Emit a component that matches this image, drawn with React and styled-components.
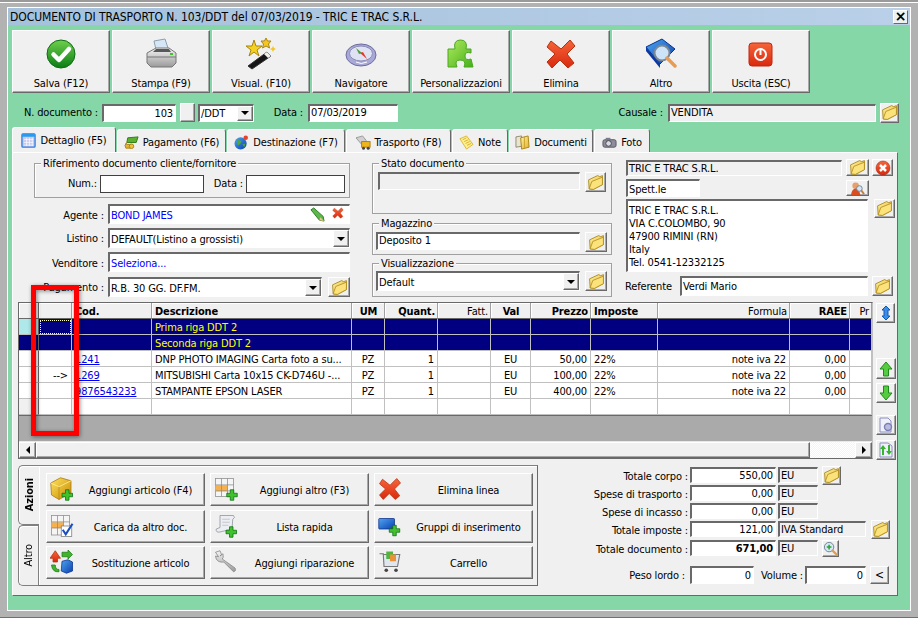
import React from "react";
import styled, { createGlobalStyle } from "styled-components";

const Global = createGlobalStyle`
  html, body { margin: 0; padding: 0; background: #b0b0b0; }
  * { box-sizing: border-box; }
`;

const PANEL = "#f0f0f0";
const DARK = "#696969";

const Defs = () => (
  <svg width="0" height="0" style={{ position: "absolute" }}>
    <defs>
      <linearGradient id="gGreen" x1="0" y1="0" x2="0" y2="1"><stop offset="0" stopColor="#6fd04c" /><stop offset="1" stopColor="#0b7d14" /></linearGradient>
      <linearGradient id="gLime" x1="0" y1="0" x2="1" y2="1"><stop offset="0" stopColor="#b0ea5c" /><stop offset="1" stopColor="#45b01c" /></linearGradient>
      <linearGradient id="gRed" x1="0" y1="0" x2="0" y2="1"><stop offset="0" stopColor="#f6663a" /><stop offset="1" stopColor="#d9280e" /></linearGradient>
      <linearGradient id="gFolder" x1="0" y1="0" x2="1" y2="1"><stop offset="0" stopColor="#fff3a8" /><stop offset="1" stopColor="#e3b127" /></linearGradient>
      <linearGradient id="gGray" x1="0" y1="0" x2="0" y2="1"><stop offset="0" stopColor="#f4f4f4" /><stop offset="1" stopColor="#9a9a9a" /></linearGradient>
      <linearGradient id="gBlue" x1="0" y1="0" x2="1" y2="1"><stop offset="0" stopColor="#4ea6f0" /><stop offset="1" stopColor="#0a3fb0" /></linearGradient>
      <linearGradient id="gGold" x1="0" y1="0" x2="1" y2="1"><stop offset="0" stopColor="#ffe25a" /><stop offset="1" stopColor="#c98a06" /></linearGradient>
    </defs>
  </svg>
);

const Ico = ({ s = 32, vb = 32, children }) => (
  <svg width={s} height={s} viewBox={`0 0 ${vb} ${vb}`}>{children}</svg>
);

const XShape = ({ fill = "url(#gRed)" }) => (
  <path d="M6 3 L16 11 L25 2 L30 8 L22 16 L29 25 L23 30 L15 22 L7 30 L2 24 L10 16 L2 9 Z" fill={fill} stroke="#b5300f" strokeWidth="1" strokeLinejoin="round" />
);

const Plus = ({ x = 20, y = 20, r = 6 }) => (
  <path d={`M${x - r / 3} ${y - r}h${(2 * r) / 3}v${(2 * r) / 3}h${(2 * r) / 3}v${(2 * r) / 3}h${(-2 * r) / 3}v${(2 * r) / 3}h${(-2 * r) / 3}v${(-2 * r) / 3}h${(-2 * r) / 3}v${(-2 * r) / 3}h${(2 * r) / 3}z`} fill="#3fc22c" stroke="#0c6a10" strokeWidth="1" />
);

const Folder = () => (
  <Ico s={17}>
    <path d="M3 11 L20 3 L24 5 L29 3 L29 20 L12 29 L4 28 Z" fill="url(#gFolder)" stroke="#a88415" strokeWidth="1.6" strokeLinejoin="round" />
    <path d="M4 28 L9 14 L29 6 L29 20 L12 29 Z" fill="#fbe27a" stroke="#a88415" strokeWidth="1.4" strokeLinejoin="round" />
  </Ico>
);

const icons = {
  save: (
    <Ico>
      <circle cx="16" cy="16" r="14" fill="url(#gGreen)" stroke="#0e6d14" />
      <path d="M8.5 16.5 L14 22 L24 11" fill="none" stroke="#fff" strokeWidth="4.5" strokeLinecap="round" strokeLinejoin="round" />
    </Ico>
  ),
  print: (
    <Ico>
      <path d="M9 3 L20 1 L24 13 L12 16 Z" fill="#d7e6f4" stroke="#8b9fb2" />
      <path d="M2 15 L11 10 L24 10 L31 15 L31 25 L27 29 L6 29 L2 25 Z" fill="url(#gGray)" stroke="#777" />
      <path d="M2 19 L31 19" stroke="#777" />
      <path d="M8 14 L26 14 L24 11 L11 11 Z" fill="#55595c" />
      <rect x="25" y="15" width="3" height="2" fill="#3fc22c" />
    </Ico>
  ),
  wand: (
    <Ico>
      <path d="M3 28 L22 14 L26 18 L7 31 Z" fill="#151515" stroke="#333" />
      <path d="M19 16 L22 14 L26 18 L23 20 Z" fill="#eee" />
      <path d="M9 2 L11 8 L17 8 L12 12 L14 18 L9 14 L4 18 L6 12 L1 8 L7 8 Z" fill="#f4d21f" stroke="#a88415" />
      <path d="M21 0 L22.5 3 L26 3 L23.5 6 L24.5 10 L21 8 L17.5 10 L18.5 6 L16 3 L19.5 3 Z" fill="#f4c61f" stroke="#a88415" />
      <path d="M28 8 L29 10 L31 11 L29 12 L28 14 L27 12 L25 11 L27 10 Z" fill="#f4c61f" />
    </Ico>
  ),
  nav: (
    <Ico>
      <ellipse cx="16" cy="17" rx="15" ry="11" fill="#a9a9d8" stroke="#6c6c9e" />
      <ellipse cx="16" cy="15.5" rx="11.5" ry="7.5" fill="#dfe2f3" stroke="#8b8bb8" />
      <path d="M11 10 L17 15 L14 16 Z" fill="#4f9a42" />
      <path d="M22 21 L15 15 L18 14 Z" fill="#e03a26" />
      <path d="M11 24 Q16 27 22 24" stroke="#fff" fill="none" />
    </Ico>
  ),
  puzzle: (
    <Ico>
      <path d="M3 11 H10 Q8 2 15.5 2 Q23 2 21 11 H26 V15 Q20 13 20 18 Q20 23 26 21 L28 29 H19 Q22 22 15 22 Q9 22 12 29 H3 Z" fill="url(#gLime)" stroke="#48a81e" strokeLinejoin="round" />
    </Ico>
  ),
  del: <Ico><XShape /></Ico>,
  book: (
    <Ico>
      <path d="M1 9 L17 1 L30 11 L15 26 Z" fill="url(#gBlue)" stroke="#0a2f8c" />
      <path d="M1 9 L15 26 L15 30 L1 13 Z" fill="#0a3aa0" />
      <circle cx="17" cy="15" r="7.5" fill="#cde4f8" stroke="#7a8794" strokeWidth="2" />
      <path d="M22 20 L30 28" stroke="#e99a53" strokeWidth="3.4" strokeLinecap="round" />
    </Ico>
  ),
  exit: (
    <Ico>
      <rect x="4" y="5" width="23" height="23" rx="3" fill="url(#gRed)" stroke="#c0280e" />
      <circle cx="15.5" cy="16.5" r="5.5" fill="none" stroke="#fff" strokeWidth="2" />
      <path d="M15.5 12 V17" stroke="#fff" strokeWidth="2" />
    </Ico>
  ),
};

const tabIcons = {
  detail: (
    <Ico s={15} vb={16}>
      <rect x="1" y="1" width="14" height="14" rx="1" fill="#c9c9f0" stroke="#2a80e0" strokeWidth="1.4" />
      <rect x="1" y="1" width="14" height="3" fill="#2a9af0" />
      <path d="M3 7h10M3 10h10M3 13h10M6 5v9M9 5v9M12 5v9" stroke="#fff" strokeWidth=".7" />
    </Ico>
  ),
  pay: (
    <Ico s={15} vb={16}>
      <path d="M4 3 L15 2 L13 8 L3 8 Z" fill="#5cb030" stroke="#2f7a18" />
      <path d="M3 8 Q1 10 3 10 L8 10 L7 14 L2 14 L1 11 Z" fill="#e6b52a" stroke="#a9801a" />
      <circle cx="8" cy="12" r="2.4" fill="#efc23a" stroke="#a9801a" />
    </Ico>
  ),
  dest: (
    <Ico s={15} vb={16}>
      <circle cx="7" cy="9" r="6.5" fill="url(#gBlue)" />
      <path d="M3 6 Q6 4 8 7 Q6 11 4 11 Z M9 10 L12 9 L11 13 Z" fill="#4eaa3a" />
      <circle cx="12.5" cy="3" r="2.4" fill="#e2452a" />
    </Ico>
  ),
  truck: (
    <Ico s={15} vb={16}>
      <path d="M0 3 L7 1 L11 6 L6 10 Z" fill="#d0d0d0" stroke="#9a9a9a" />
      <rect x="6" y="7" width="9" height="6" fill="#f0b51c" stroke="#a87e10" />
      <circle cx="8" cy="14" r="1.6" fill="#444" />
      <circle cx="13" cy="14" r="1.6" fill="#444" />
    </Ico>
  ),
  note: (
    <Ico s={15} vb={16}>
      <path d="M1 4 L8 1 L15 10 L8 15 Z" fill="#fdf08a" stroke="#d7b73a" />
      <path d="M4 5 L8 3M5.5 7 L10 5M7 9 L11.5 7M8.5 11 L13 9" stroke="#d29b25" strokeWidth=".8" />
    </Ico>
  ),
  docs: (
    <Ico s={15} vb={16}>
      <path d="M1 2 L7 1 L7 12 L1 13 Z" fill="#e8e4d2" stroke="#8f8a70" />
      <path d="M6 3 L14 1 L15 13 L7 15 Z" fill="url(#gFolder)" stroke="#a88415" />
      <path d="M10 2 V14" stroke="#c9a02a" />
    </Ico>
  ),
  photo: (
    <Ico s={15} vb={16}>
      <rect x="1" y="5" width="14" height="8" rx="2" fill="#8d8d9b" stroke="#55555f" />
      <rect x="4" y="3" width="5" height="3" fill="#7a7a85" />
      <circle cx="7" cy="9" r="3" fill="#d9d9e6" stroke="#44444e" />
    </Ico>
  ),
};

const actionIcons = {
  addArt: (
    <Ico s={24}>
      <path d="M1 8 L14 1 L28 5 L28 21 L12 30 L2 24 Z" fill="url(#gGold)" stroke="#a3760a" />
      <path d="M1 8 L12 13 L28 5" fill="none" stroke="#fff1a0" />
      <path d="M12 13 V30" stroke="#b98a0a" />
      <Plus x={23} y={24} r={7} />
    </Ico>
  ),
  addOther: (
    <Ico s={24}>
      <rect x="2" y="2" width="24" height="24" fill="#f5f5f5" stroke="#8a8a8a" />
      <rect x="2" y="11" width="16" height="8" fill="#f6b04e" />
      <path d="M2 10.5h24M2 18.5h24M10 2v24M18 2v24" stroke="#8a8a8a" />
      <Plus x={24} y={24} r={7} />
    </Ico>
  ),
  del: <Ico s={24}><XShape /></Ico>,
  load: (
    <Ico s={24}>
      <rect x="2" y="2" width="24" height="26" fill="#f5f5f5" stroke="#8a8a8a" />
      <rect x="2" y="11" width="16" height="8" fill="#f6b04e" />
      <path d="M2 10.5h24M2 18.5h24M10 2v26M18 2v26" stroke="#8a8a8a" />
      <rect x="15" y="16" width="14" height="14" fill="#fff" stroke="#777" />
      <path d="M17 21 L21 27 L30 13" fill="none" stroke="#1a4fc0" strokeWidth="2.8" />
    </Ico>
  ),
  list: (
    <Ico s={24}>
      <path d="M8 2 L26 2 Q29 5 25 7 L24 20 L8 24 Q2 25 3 20 L8 18 Z" fill="#eceef2" stroke="#8b8f99" />
      <path d="M11 7h10M11 11h10M11 15h8" stroke="#b5b8c0" />
      <Plus x={23} y={24} r={7} />
    </Ico>
  ),
  group: (
    <Ico s={24}>
      <rect x="1" y="6" width="21" height="14" rx="1" fill="url(#gBlue)" stroke="#0a2f8c" />
      <Plus x={22} y={22} r={7} />
    </Ico>
  ),
  swap: (
    <Ico s={24}>
      <path d="M7 1 L14 11 L10 11 L10 16 L4 16 L4 11 L0 11 Z" fill="url(#gRed)" stroke="#b5300f" />
      <path d="M16 3 L24 3 L24 0 L30 6 L24 12 L24 9 L16 9 Z" fill="#3fb52c" stroke="#207a18" />
      <path d="M2 20 Q3 30 12 29 L12 26 Q7 26 7 20 Z" fill="#3fb52c" stroke="#207a18" />
      <path d="M16 15 L24 13 L30 16 L30 28 L22 31 L15 28 Z" fill="url(#gBlue)" stroke="#0a2f8c" />
    </Ico>
  ),
  repair: (
    <Ico s={24}>
      <path d="M2 3 L8 1 L10 6 L8 8 L12 5 Q13 11 11 12 L28 24 Q30 28 26 29 L13 16 Q6 17 3 12 L2 8 L6 9 Z" fill="url(#gGray)" stroke="#808080" />
    </Ico>
  ),
  cart: (
    <Ico s={24}>
      <path d="M2 5 L7 5 L8 22 L26 22 L29 6 L7 6" fill="#dfe6f0" stroke="#777" strokeWidth="1.5" />
      <rect x="11" y="2" width="9" height="10" fill="#4fb540" />
      <rect x="16" y="6" width="8" height="9" fill="#e8923a" />
      <circle cx="11" cy="27" r="2.4" fill="#444" />
      <circle cx="24" cy="27" r="2.4" fill="#444" />
    </Ico>
  ),
};

const Window = styled.div`
  position: relative;
  width: 918px;
  height: 618px;
  padding: 7px 7px 7px 7px;
  background: #b2b2b2;
  font-family: "DejaVu Sans Condensed", "DejaVu Sans", sans-serif;
  font-stretch: condensed;
  font-size: 11px;
  letter-spacing: -0.15px;
  color: #000;
  overflow: hidden;
  box-shadow: inset 0 2px #9a9a9a, inset 0 3px #fff, inset 0 -1px #707070;
`;

const Dialog = styled.div`
  height: 604px;
  border: 1px solid #fff;
  background: #85d7a8;
  display: flex;
  flex-direction: column;
`;

const TitleBar = styled.div`
  height: 17px;
  flex: none;
  padding: 0 2px;
  display: flex;
  align-items: center;
  justify-content: space-between;
  background: linear-gradient(90deg, #a5c1db, #bad0e9);
  font-size: 12px;
  letter-spacing: -0.07px;
`;

const CloseBox = styled.div`
  width: 15px;
  height: 14px;
  background: ${PANEL};
  border: 1px solid;
  border-color: #fff ${DARK} ${DARK} #fff;
  font: bold 14px/11px "DejaVu Sans", sans-serif;
  text-align: center;
`;

const Body = styled.div`
  flex: 1;
  padding: 5px 12px 14px 4px;
  display: flex;
  flex-direction: column;
  min-height: 0;
`;

const Toolbar = styled.div`
  display: flex;
  gap: 2px;
  height: 63px;
  flex: none;
`;

const raised = `
  background: ${PANEL};
  border: 1px solid;
  border-color: #fff ${DARK} ${DARK} #fff;
  box-shadow: inset -1px -1px #a8a8a8;
`;

const ToolButton = styled.div`
  ${raised}
  width: 98px;
  display: flex;
  flex-direction: column;
  align-items: center;
  padding-top: 7px;
  svg { flex: none; }
  span { margin-top: auto; line-height: 16px; white-space: nowrap; }
`;

const DocRow = styled.div`
  display: flex;
  align-items: center;
  height: 19px;
  flex: none;
  margin-top: 10px;
`;

const Label = styled.div`
  flex: none;
  width: ${(p) => p.$w || 60}px;
  margin-left: ${(p) => p.$ml || 0}px;
  margin-right: ${(p) => (p.$mr === undefined ? 4 : p.$mr)}px;
  padding-top: ${(p) => p.$pt || 0}px;
  text-align: ${(p) => p.$align || "right"};
  line-height: ${(p) => (p.$lh ? `${p.$lh}px` : "normal")};
  white-space: nowrap;
`;

const Field = styled.div`
  flex: none;
  width: ${(p) => p.$w}px;
  height: ${(p) => p.$h || 18}px;
  margin-left: ${(p) => p.$ml || 0}px;
  background: ${(p) => (p.$flat ? PANEL : "#fff")};
  border: 1px solid;
  border-width: 2px 1px 1px 2px;
  border-color: ${DARK} #fff #fff ${DARK};
  padding: 0 ${(p) => (p.$align === "right" ? 2 : 0)}px 0 1px;
  text-align: ${(p) => p.$align || "left"};
  color: ${(p) => (p.$blue ? "#0000ff" : "#000")};
  font-weight: ${(p) => (p.$bold ? 700 : 400)};
  line-height: ${(p) => p.$lh || (p.$h || 18) - 3}px;
  white-space: nowrap;
  overflow: hidden;
  display: ${(p) => (p.$flex ? "flex" : "block")};
  align-items: center;
`;

const SolidField = styled(Field)`
  border: 1px solid #404040;
  background: #fff;
`;

const FieldText = styled.span`
  padding-top: 2px;
`;

const DropBtn = styled.div`
  ${raised}
  flex: none;
  width: 16px;
  height: 100%;
  margin-left: auto;
  display: flex;
  align-items: center;
  justify-content: center;
  &::after {
    content: "";
    border: 4px solid transparent;
    border-top: 4px solid #000;
    border-bottom: 0;
  }
`;

const SquareBtn = styled.div`
  ${raised}
  flex: none;
  width: ${(p) => p.$w || 21}px;
  height: ${(p) => p.$h || 20}px;
  margin-left: ${(p) => p.$ml || 0}px;
  margin-top: ${(p) => p.$mt || 0}px;
  display: flex;
  align-items: center;
  justify-content: center;
  font-size: 12px;
`;

const TabStrip = styled.div`
  display: flex;
  align-items: flex-end;
  gap: 1px;
  height: 25px;
  flex: none;
  margin-top: 5px;
`;

const Tab = styled.div`
  width: ${(p) => p.$w}px;
  height: ${(p) => (p.$active ? 25 : 23)}px;
  padding-top: ${(p) => (p.$active ? 1 : 3)}px;
  background: ${PANEL};
  border: 1px solid;
  border-bottom: 0;
  border-color: #fff ${DARK} transparent #fff;
  border-radius: 3px 3px 0 0;
  display: flex;
  align-items: center;
  justify-content: center;
  gap: 4px;
  white-space: nowrap;
`;

const Page = styled.div`
  flex: 1;
  min-height: 0;
  background: ${PANEL};
  border: 1px solid;
  border-color: #fff ${DARK} ${DARK} #fff;
  display: flex;
  flex-direction: column;
`;

const TopArea = styled.div`
  display: flex;
  height: 149px;
  flex: none;
  padding: 6px 0 0 21px;
`;

const LeftCol = styled.div`
  width: 316px;
  flex: none;
  padding-top: 4px;
`;

const MidCol = styled.div`
  width: 240px;
  flex: none;
  margin-left: 22px;
  padding-top: 4px;
  display: flex;
  flex-direction: column;
`;

const RightCol = styled.div`
  width: 272px;
  flex: none;
  margin-left: 14px;
  display: flex;
  flex-direction: column;
`;

const Group = styled.div`
  position: relative;
  height: ${(p) => p.$h}px;
  margin-top: ${(p) => p.$mt || 0}px;
  border: 1px solid #a0a0a0;
  box-shadow: inset 1px 1px #fff;
  padding: ${(p) => p.$pt}px 0 0 ${(p) => p.$pl}px;
  display: flex;
  align-items: flex-start;
`;

const Legend = styled.span`
  position: absolute;
  left: 6px;
  top: -7px;
  padding: 0 2px;
  background: ${PANEL};
  line-height: 14px;
  white-space: nowrap;
`;

const FormRow = styled.div`
  display: flex;
  align-items: center;
  margin-top: ${(p) => p.$mt || 0}px;
`;

const GridArea = styled.div`
  display: flex;
  flex: none;
  margin-left: 5px;
  height: 157px;
`;

const GridFrame = styled.div`
  width: 855px;
  flex: none;
  display: flex;
  flex-direction: column;
  background: #aaa;
  border: 1px solid ${DARK};
  border-right-color: #c0c0c0;
  border-bottom-width: 1px;
`;

const Table = styled.div`
  display: grid;
  grid-template-columns: 20px 33px 80px 200px 33px 53px 53px 40px 60px 67px 132px 60px 22px;
  grid-auto-rows: 16px;
  flex: none;
  background: #fff;
  overflow: hidden;
  border-bottom: 1px solid ${DARK};
  height: 113px;
`;

const HeadCell = styled.div`
  background: ${PANEL};
  border-right: 1px solid ${(p) => (p.$strong ? DARK : "#a0a0a0")};
  border-bottom: 1px solid ${DARK};
  box-shadow: inset 1px 1px #fff;
  padding: 1px 2px 0 3px;
  font-weight: ${(p) => (p.$bold ? 700 : 400)};
  text-align: ${(p) => p.$align || "left"};
  line-height: 15px;
  white-space: nowrap;
  overflow: hidden;
`;

const Cell = styled.div`
  background: ${(p) => p.$bg || "#fff"};
  color: ${(p) => (p.$navy ? "#ffff00" : "#000")};
  border-right: 1px solid ${(p) => (p.$strong ? DARK : "#c0c0c0")};
  border-bottom: 1px solid #c0c0c0;
  padding: 1px 3px 0;
  text-align: ${(p) => p.$align || "left"};
  line-height: 15px;
  white-space: nowrap;
  overflow: hidden;
  outline: ${(p) => (p.$focus ? "1px dotted #ffffc0" : "none")};
  outline-offset: -2px;
`;

const Link = styled.span`
  color: #0000ee;
  text-decoration: underline;
`;

const GrayFill = styled.div`
  flex: 1;
  background: #aaa;
`;

const HScroll = styled.div`
  height: 16px;
  flex: none;
  display: flex;
  background: ${PANEL};
  box-shadow: 0 -1px #e8e8e8;
`;

const ScrollBtn = styled.div`
  ${raised}
  width: 17px;
  flex: none;
  display: flex;
  align-items: center;
  justify-content: center;
  &::after {
    content: "";
    border: 4px solid transparent;
    ${(p) => (p.$left ? "border-right: 4px solid #000; border-left: 0;" : "border-left: 4px solid #000; border-right: 0;")}
  }
`;

const ScrollThumb = styled.div`
  ${raised}
  flex: 1;
`;

const ScrollTrack = styled.div`
  width: 45px;
  flex: none;
  background: repeating-conic-gradient(#f4f4f4 0 25%, #fff 0 50%) 0 0 / 2px 2px;
`;

const SideCol = styled.div`
  width: 22px;
  margin-left: 3px;
  display: flex;
  flex-direction: column;
`;

const BottomArea = styled.div`
  flex: 1;
  display: flex;
  min-height: 0;
  margin: 6px 0 0 5px;
`;

const VTabs = styled.div`
  width: 21px;
  flex: none;
  display: flex;
  flex-direction: column;
  position: relative;
  z-index: 1;
`;

const VTab = styled.div`
  height: ${(p) => p.$h}px;
  width: ${(p) => (p.$active ? 21 : 20)}px;
  background: ${PANEL};
  border: 1px solid #808080;
  border-right: 0;
  box-shadow: inset 1px 1px #fff;
  border-radius: 5px 0 0 5px;
  display: flex;
  align-items: center;
  justify-content: center;
  font-weight: ${(p) => (p.$active ? 700 : 400)};
  span { writing-mode: vertical-rl; transform: rotate(180deg); }
`;

const ActionPanel = styled.div`
  width: 500px;
  height: 121px;
  flex: none;
  margin-left: -1px;
  border: 1px solid;
  border-color: #808080 ${DARK} ${DARK} #808080;
  box-shadow: inset 1px 1px #fff;
  padding: 7px 0 0 7px;
  display: grid;
  grid-template-columns: repeat(3, 159px);
  grid-template-rows: repeat(3, 33px);
  column-gap: 5px;
  row-gap: 3.5px;
`;

const ActionButton = styled.div`
  ${raised}
  position: relative;
  display: flex;
  align-items: center;
  padding: 2px 0 0 30px;
  justify-content: center;
  white-space: nowrap;
  svg { position: absolute; left: 3px; top: 3px; }
`;

const Totals = styled.div`
  flex: 1;
  display: flex;
  flex-direction: column;
  gap: 2px;
  padding-top: 2px;
`;

const TotalRow = styled.div`
  display: flex;
  align-items: center;
  height: 16px;
  margin-top: ${(p) => p.$mt || 0}px;
`;

const Annotation = styled.div`
  position: absolute;
  left: 31px;
  top: 285px;
  width: 48px;
  height: 151px;
  border: 5px solid #f00;
  filter: drop-shadow(1px 1px 2px rgba(0, 0, 0, 0.45));
`;

const IconPair = styled.span`
  margin-left: auto;
  display: flex;
  gap: 7px;
  padding-right: 5px;
`;

const AddressBox = styled.div`
  flex: none;
  width: 242px;
  height: 73px;
  background: #fff;
  border: 1px solid;
  border-width: 2px 1px 1px 2px;
  border-color: ${DARK} #fff #fff ${DARK};
  padding: 3px 0 0 1px;
  line-height: 13px;
`;

const AddressBtn = styled.div`
  ${raised}
  flex: none;
  width: 21px;
  height: 19px;
  margin: 0 0 54px 6px;
  display: flex;
  align-items: center;
  justify-content: center;
`;

const tools = [
  ["save", "Salva (F12)"],
  ["print", "Stampa (F9)"],
  ["wand", "Visual. (F10)"],
  ["nav", "Navigatore"],
  ["puzzle", "Personalizzazioni"],
  ["del", "Elimina"],
  ["book", "Altro"],
  ["exit", "Uscita (ESC)"],
];

const tabs = [
  ["detail", "Dettaglio (F5)", 104, true],
  ["pay", "Pagamento (F6)", 109],
  ["dest", "Destinazione (F7)", 118],
  ["truck", "Trasporto (F8)", 105],
  ["note", "Note", 56],
  ["docs", "Documenti", 84],
  ["photo", "Foto", 56],
];

const header = [
  ["", false, "left"],
  ["", false, "left"],
  ["Cod.", true, "left"],
  ["Descrizione", true, "left"],
  ["UM", true, "center"],
  ["Quant.", true, "right"],
  ["Fatt.", false, "right"],
  ["Val", true, "center"],
  ["Prezzo", true, "right"],
  ["Imposte", true, "left"],
  ["Formula", false, "right"],
  ["RAEE", true, "right"],
  ["Pr", false, "right"],
];

const aligns = ["left", "right", "left", "left", "center", "right", "right", "center", "right", "left", "right", "right", "left"];

const rows = [
  { navy: true, cells: ["", "", "", "Prima riga DDT 2", "", "", "", "", "", "", "", "", ""] },
  { navy: true, cells: ["", "", "", "Seconda riga DDT 2", "", "", "", "", "", "", "", "", ""] },
  { cells: ["", "", "1241", "DNP PHOTO IMAGING Carta foto a su...", "PZ", "1", "", "EU", "50,00", "22%", "note iva 22", "0,00", ""] },
  { cells: ["", "-->", "1269", "MITSUBISHI Carta 10x15 CK-D746U -...", "PZ", "1", "", "EU", "100,00", "22%", "note iva 22", "0,00", ""] },
  { cells: ["", "", "9876543233", "STAMPANTE EPSON LASER", "PZ", "1", "", "EU", "400,00", "22%", "note iva 22", "0,00", ""] },
  { cells: ["", "", "", "", "", "", "", "", "", "", "", "", ""] },
];

const actions = [
  ["addArt", "Aggiungi articolo (F4)"],
  ["addOther", "Aggiungi altro (F3)"],
  ["del", "Elimina linea"],
  ["load", "Carica da altro doc."],
  ["list", "Lista rapida"],
  ["group", "Gruppi di inserimento"],
  ["swap", "Sostituzione articolo"],
  ["repair", "Aggiungi riparazione"],
  ["cart", "Carrello"],
];

const totals = [
  { label: "Totale corpo :", value: "550,00", unit: "EU", btn: true },
  { label: "Spese di trasporto :", value: "0,00", unit: "EU" },
  { label: "Spese di incasso :", value: "0,00", unit: "EU" },
  { label: "Totale imposte :", value: "121,00", unit: "IVA Standard", wide: true, btn: true },
  { label: "Totale documento :", value: "671,00", unit: "EU", bold: true, zoom: true, mt: 1 },
];

const arrowSvg = (d, fill, stroke) => (
  <Ico s={16} vb={16}><path d={d} fill={fill} stroke={stroke} /></Ico>
);

function BodyRow({ row, index }) {
  return row.cells.map((text, c) => {
    let bg = row.navy ? "#000080" : "#fff";
    if (index === 0 && c === 0) bg = "#aee8e8";
    if (index === 5 && c === 0) bg = PANEL;
    return (
      <Cell
        key={c}
        $bg={bg}
        $navy={row.navy}
        $align={aligns[c]}
        $strong={c === 0}
        $focus={index === 0 && c === 1}
      >
        {c === 2 && text ? <Link>{text}</Link> : text}
      </Cell>
    );
  });
}

export default function App() {
  return (
    <Window>
      <Global />
      <Defs />
      <Dialog>
        <TitleBar>
          DOCUMENTO DI TRASPORTO N. 103/DDT del 07/03/2019 - TRIC E TRAC S.R.L.
          <CloseBox>×</CloseBox>
        </TitleBar>
        <Body>
          <Toolbar>
            {tools.map(([icon, label]) => (
              <ToolButton key={label}>
                {icons[icon]}
                <span>{label}</span>
              </ToolButton>
            ))}
          </Toolbar>

          <DocRow>
            <Label $w={86}>N. documento :</Label>
            <Field $w={74} $align="right">103</Field>
            <SquareBtn $w={15} $h={19} $ml={4} />
            <Field $w={56} $ml={3} $flex>/DDT<DropBtn /></Field>
            <Label $w={30} $ml={19} $mr={5}>Data :</Label>
            <Field $w={90} $lh={14}>07/03/2019</Field>
            <Label $w={50} $ml={215} $mr={5}>Causale :</Label>
            <Field $w={208} $flat $lh={13}>VENDITA</Field>
            <SquareBtn $w={19} $h={20} $ml={4}><Folder /></SquareBtn>
          </DocRow>

          <TabStrip>
            {tabs.map(([icon, label, w, active]) => (
              <Tab key={label} $w={w} $active={active}>
                {tabIcons[icon]}
                {label}
              </Tab>
            ))}
          </TabStrip>

          <Page>
            <TopArea>
              <LeftCol>
                <Group $h={35} $pt={11} $pl={1}>
                  <Legend>Riferimento documento cliente/fornitore</Legend>
                  <Label $w={61} $mr={3} $lh={18}>Num.:</Label>
                  <SolidField $w={104} />
                  <Label $w={36} $ml={3} $mr={3} $lh={18}>Data :</Label>
                  <SolidField $w={99} />
                </Group>
                <FormRow $mt={6}>
                  <Label $w={70} $pt={2}>Agente :</Label>
                  <Field $w={242} $h={20} $blue $flex>
                    <FieldText>BOND JAMES</FieldText>
                    <IconPair>
                      <Ico s={15} vb={16}>
                        <path d="M1 3 L4 1 L14 10 L15 15 L10 14 Z" fill="#5db84a" stroke="#2f7a28" />
                        <path d="M11 11 L15 15 L10 14 Z" fill="#eac48a" />
                      </Ico>
                      <Ico s={12}><XShape /></Ico>
                    </IconPair>
                  </Field>
                </FormRow>
                <FormRow $mt={4}>
                  <Label $w={70}>Listino :</Label>
                  <Field $w={242} $h={20} $flex><FieldText>DEFAULT(Listino a grossisti)</FieldText><DropBtn /></Field>
                </FormRow>
                <FormRow $mt={4}>
                  <Label $w={70} $pt={2}>Venditore :</Label>
                  <Field $w={242} $h={20} $blue $flex><FieldText>Seleziona...</FieldText></Field>
                </FormRow>
                <FormRow $mt={5}>
                  <Label $w={70}>Pagamento :</Label>
                  <Field $w={214} $h={20} $flex><FieldText>R.B. 30 GG. DF.FM.</FieldText><DropBtn /></Field>
                  <SquareBtn $w={22} $h={20} $ml={6}><Folder /></SquareBtn>
                </FormRow>
              </LeftCol>

              <MidCol>
                <Group $h={51} $pt={8} $pl={5}>
                  <Legend>Stato documento</Legend>
                  <Field $w={202} $flat />
                  <SquareBtn $w={21} $h={20} $ml={5}><Folder /></SquareBtn>
                </Group>
                <Group $h={32} $mt={9} $pt={8} $pl={3}>
                  <Legend>Magazzino</Legend>
                  <Field $w={204} $lh={13}>Deposito 1</Field>
                  <SquareBtn $w={22} $h={20} $ml={5}><Folder /></SquareBtn>
                </Group>
                <Group $h={34} $mt={8} $pt={7} $pl={3}>
                  <Legend>Visualizzazione</Legend>
                  <Field $w={204} $h={20} $flex><FieldText>Default</FieldText><DropBtn /></Field>
                  <SquareBtn $w={22} $h={20} $ml={5}><Folder /></SquareBtn>
                </Group>
              </MidCol>

              <RightCol>
                <FormRow>
                  <Field $w={216} $h={16} $flat>TRIC E TRAC S.R.L.</Field>
                  <SquareBtn $w={23} $h={17} $ml={4}><Folder /></SquareBtn>
                  <SquareBtn $w={21} $h={17} $ml={3}>
                    <Ico s={16}>
                      <circle cx="16" cy="16" r="14" fill="url(#gRed)" stroke="#a01808" />
                      <path d="M10 10 L22 22 M22 10 L10 22" stroke="#fff" strokeWidth="5" />
                    </Ico>
                  </SquareBtn>
                </FormRow>
                <FormRow $mt={3}>
                  <Field $w={74} $lh={17}>Spett.le</Field>
                  <SquareBtn $w={23} $h={16} $ml={146}>
                    <Ico s={15} vb={16}>
                      <circle cx="6" cy="5" r="3.5" fill="#e8a06a" />
                      <path d="M1 15 Q2 8 6 8 Q10 8 11 15 Z" fill="#d94e20" />
                      <circle cx="10" cy="8" r="3" fill="#d6e8f8" stroke="#6f7f92" />
                      <path d="M12 10 L15 14" stroke="#c08040" strokeWidth="2" />
                    </Ico>
                  </SquareBtn>
                </FormRow>
                <FormRow $mt={2}>
                  <AddressBox>
                    TRIC E TRAC S.R.L.<br />VIA C.COLOMBO, 90<br />47900 RIMINI (RN)<br />Italy<br />Tel. 0541-12332125
                  </AddressBox>
                  <AddressBtn><Folder /></AddressBtn>
                </FormRow>
                <FormRow $mt={4}>
                  <Label $w={50} $align="left" $mr={5} $ml={-1}>Referente</Label>
                  <Field $w={188} $h={20}>Verdi Mario</Field>
                  <SquareBtn $w={21} $h={20} $ml={4}><Folder /></SquareBtn>
                </FormRow>
              </RightCol>
            </TopArea>

            <GridArea>
              <GridFrame>
                <Table>
                  {header.map(([text, bold, align], i) => (
                    <HeadCell key={i} $bold={bold} $align={align} $strong={i === 0}>{text}</HeadCell>
                  ))}
                  {rows.map((row, i) => <BodyRow key={i} row={row} index={i} />)}
                </Table>
                <GrayFill />
                <HScroll>
                  <ScrollBtn $left />
                  <ScrollThumb />
                  <ScrollTrack />
                  <ScrollBtn />
                </HScroll>
              </GridFrame>
              <SideCol>
                <SquareBtn $w={19} $h={20} $mt={1}>
                  {arrowSvg("M8 1 L12 5 L10 5 L10 11 L12 11 L8 15 L4 11 L6 11 L6 5 L4 5 Z", "#3a8ee8", "#1358b0")}
                </SquareBtn>
                <SquareBtn $w={20} $h={21} $mt={35}>
                  {arrowSvg("M8 1 L14 8 L10.5 8 L10.5 15 L5.5 15 L5.5 8 L2 8 Z", "#55cc40", "#1f8a1a")}
                </SquareBtn>
                <SquareBtn $w={20} $h={20} $mt={4}>
                  {arrowSvg("M8 15 L14 8 L10.5 8 L10.5 1 L5.5 1 L5.5 8 L2 8 Z", "#55cc40", "#1f8a1a")}
                </SquareBtn>
                <SquareBtn $w={20} $h={20} $mt={12}>
                  <Ico s={16} vb={16}>
                    <path d="M2 1h8l3 3v11H2z" fill="#eef0fa" stroke="#8a8fc0" />
                    <circle cx="10" cy="10" r="3.5" fill="#b9bce0" stroke="#7b7fb5" strokeWidth="1.4" />
                  </Ico>
                </SquareBtn>
                <SquareBtn $w={20} $h={20} $mt={5}>
                  <Ico s={16} vb={16}>
                    <path d="M2 1h8l4 3v11H2z" fill="#eef0fa" stroke="#8a8fc0" />
                    <path d="M5 3 L8 7 L6 7 L6 13 L4 13 L4 7 L2 7 Z" fill="#35b52c" />
                    <path d="M11 13 L8 9 L10 9 L10 3 L12 3 L12 9 L14 9 Z" fill="#35b52c" />
                  </Ico>
                </SquareBtn>
              </SideCol>
            </GridArea>

            <BottomArea>
              <VTabs>
                <VTab $active $h={60}><span>Azioni</span></VTab>
                <VTab $h={61}><span>Altro</span></VTab>
              </VTabs>
              <ActionPanel>
                {actions.map(([icon, label]) => (
                  <ActionButton key={label}>
                    {actionIcons[icon]}
                    {label}
                  </ActionButton>
                ))}
              </ActionPanel>
              <Totals>
                {totals.map((t) => (
                  <TotalRow key={t.label} $mt={t.mt}>
                    <Label $w={150} $mr={2} $pt={2}>{t.label}</Label>
                    <Field $w={86} $h={16} $align="right" $bold={t.bold} $lh={14}>{t.value}</Field>
                    <Field $w={t.wide ? 88 : 40} $h={16} $ml={2} $flat $lh={14}>{t.unit}</Field>
                    {t.btn && (
                      <SquareBtn $w={19} $h={19} $ml={t.wide ? 5 : 4}><Folder /></SquareBtn>
                    )}
                    {t.zoom && (
                      <SquareBtn $w={17} $h={17} $ml={4}>
                        <Ico s={15} vb={16}>
                          <circle cx="6.5" cy="6.5" r="5" fill="#d6e8f8" stroke="#6f7f92" />
                          <path d="M6.5 4v5M4 6.5h5" stroke="#2aa52a" strokeWidth="1.6" />
                          <path d="M10 10 L15 15" stroke="#e59a50" strokeWidth="2.4" />
                        </Ico>
                      </SquareBtn>
                    )}
                  </TotalRow>
                ))}
                <TotalRow $mt={9}>
                  <Label $w={147} $mr={5}>Peso lordo :</Label>
                  <Field $w={64} $h={18} $align="right">0</Field>
                  <Label $w={43} $ml={6} $mr={2}>Volume :</Label>
                  <Field $w={61} $h={18} $align="right">0</Field>
                  <SquareBtn $w={19} $h={18} $ml={4}>&lt;</SquareBtn>
                </TotalRow>
              </Totals>
            </BottomArea>
          </Page>
        </Body>
      </Dialog>
      <Annotation />
    </Window>
  );
}
